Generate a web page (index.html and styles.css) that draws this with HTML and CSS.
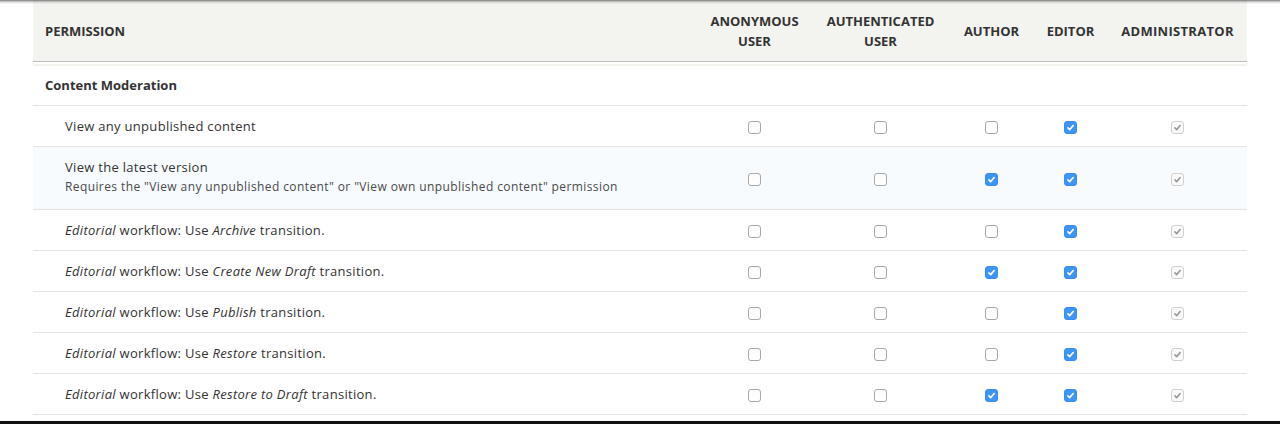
FILE: index.html
```html
<!DOCTYPE html>
<html lang="en">
<head>
<meta charset="utf-8">
<title>Permissions</title>
<link rel="stylesheet" href="styles.css">
</head>
<body>
<div class="top-shade"></div>
<main class="page">
  <table class="perm-table">
    <colgroup>
      <col class="c-perm">
      <col class="c-anon">
      <col class="c-auth">
      <col class="c-author">
      <col class="c-editor">
      <col class="c-admin">
    </colgroup>
    <thead>
      <tr>
        <th class="th-perm">Permission</th>
        <th>Anonymous<br>user</th>
        <th>Authenticated<br>user</th>
        <th>Author</th>
        <th>Editor</th>
        <th class="th-admin">Administrator</th>
      </tr>
    </thead>
    <tbody>
      <tr class="group">
        <td class="module" colspan="6">Content Moderation</td>
      </tr>
      <tr>
        <td class="perm">View any unpublished content</td>
        <td class="cbc"><span class="cb"></span></td>
        <td class="cbc"><span class="cb"></span></td>
        <td class="cbc"><span class="cb"></span></td>
        <td class="cbc"><span class="cb on"><svg viewBox="0 0 12 12"><path d="M3.2 6.4 5.1 8.3 8.9 3.9"/></svg></span></td>
        <td class="cbc"><span class="cb dis"><svg viewBox="0 0 12 12"><path d="M3.2 6.4 5.1 8.3 8.9 3.9"/></svg></span></td>
      </tr>
      <tr class="hl">
        <td class="perm">View the latest version<div class="desc">Requires the "View any unpublished content" or "View own unpublished content" permission</div></td>
        <td class="cbc"><span class="cb"></span></td>
        <td class="cbc"><span class="cb"></span></td>
        <td class="cbc"><span class="cb on"><svg viewBox="0 0 12 12"><path d="M3.2 6.4 5.1 8.3 8.9 3.9"/></svg></span></td>
        <td class="cbc"><span class="cb on"><svg viewBox="0 0 12 12"><path d="M3.2 6.4 5.1 8.3 8.9 3.9"/></svg></span></td>
        <td class="cbc"><span class="cb dis"><svg viewBox="0 0 12 12"><path d="M3.2 6.4 5.1 8.3 8.9 3.9"/></svg></span></td>
      </tr>
      <tr>
        <td class="perm"><em>Editorial</em> workflow: Use <em>Archive</em> transition.</td>
        <td class="cbc"><span class="cb"></span></td>
        <td class="cbc"><span class="cb"></span></td>
        <td class="cbc"><span class="cb"></span></td>
        <td class="cbc"><span class="cb on"><svg viewBox="0 0 12 12"><path d="M3.2 6.4 5.1 8.3 8.9 3.9"/></svg></span></td>
        <td class="cbc"><span class="cb dis"><svg viewBox="0 0 12 12"><path d="M3.2 6.4 5.1 8.3 8.9 3.9"/></svg></span></td>
      </tr>
      <tr>
        <td class="perm"><em>Editorial</em> workflow: Use <em>Create New Draft</em> transition.</td>
        <td class="cbc"><span class="cb"></span></td>
        <td class="cbc"><span class="cb"></span></td>
        <td class="cbc"><span class="cb on"><svg viewBox="0 0 12 12"><path d="M3.2 6.4 5.1 8.3 8.9 3.9"/></svg></span></td>
        <td class="cbc"><span class="cb on"><svg viewBox="0 0 12 12"><path d="M3.2 6.4 5.1 8.3 8.9 3.9"/></svg></span></td>
        <td class="cbc"><span class="cb dis"><svg viewBox="0 0 12 12"><path d="M3.2 6.4 5.1 8.3 8.9 3.9"/></svg></span></td>
      </tr>
      <tr>
        <td class="perm"><em>Editorial</em> workflow: Use <em>Publish</em> transition.</td>
        <td class="cbc"><span class="cb"></span></td>
        <td class="cbc"><span class="cb"></span></td>
        <td class="cbc"><span class="cb"></span></td>
        <td class="cbc"><span class="cb on"><svg viewBox="0 0 12 12"><path d="M3.2 6.4 5.1 8.3 8.9 3.9"/></svg></span></td>
        <td class="cbc"><span class="cb dis"><svg viewBox="0 0 12 12"><path d="M3.2 6.4 5.1 8.3 8.9 3.9"/></svg></span></td>
      </tr>
      <tr>
        <td class="perm"><em>Editorial</em> workflow: Use <em>Restore</em> transition.</td>
        <td class="cbc"><span class="cb"></span></td>
        <td class="cbc"><span class="cb"></span></td>
        <td class="cbc"><span class="cb"></span></td>
        <td class="cbc"><span class="cb on"><svg viewBox="0 0 12 12"><path d="M3.2 6.4 5.1 8.3 8.9 3.9"/></svg></span></td>
        <td class="cbc"><span class="cb dis"><svg viewBox="0 0 12 12"><path d="M3.2 6.4 5.1 8.3 8.9 3.9"/></svg></span></td>
      </tr>
      <tr>
        <td class="perm"><em>Editorial</em> workflow: Use <em>Restore to Draft</em> transition.</td>
        <td class="cbc"><span class="cb"></span></td>
        <td class="cbc"><span class="cb"></span></td>
        <td class="cbc"><span class="cb on"><svg viewBox="0 0 12 12"><path d="M3.2 6.4 5.1 8.3 8.9 3.9"/></svg></span></td>
        <td class="cbc"><span class="cb on"><svg viewBox="0 0 12 12"><path d="M3.2 6.4 5.1 8.3 8.9 3.9"/></svg></span></td>
        <td class="cbc"><span class="cb dis"><svg viewBox="0 0 12 12"><path d="M3.2 6.4 5.1 8.3 8.9 3.9"/></svg></span></td>
      </tr>
    </tbody>
  </table>
</main>
<div class="bottom-edge"></div>
</body>
</html>
```
FILE: styles.css
```css
html, body {
  margin: 0;
  padding: 0;
  background: #fff;
}
body {
  font-family: "Open Sans", "Noto Sans", sans-serif;
  font-size: 13px;
  color: #333;
  width: 1280px;
  height: 424px;
  overflow: hidden;
  position: relative;
}
.page {
  padding: 0 33px;
}
.perm-table {
  width: 1214px;
  border-collapse: collapse;
  table-layout: fixed;
}
.c-perm { width: 665px; }
.c-anon { width: 113px; }
.c-auth { width: 139px; }
.c-author { width: 83px; }
.c-editor { width: 75px; }
.c-admin { width: 139px; }

.perm-table th {
  background: #f3f3ef;
  border-bottom: 1px solid #bfbfba;
  padding: 11px 12px 10px;
  line-height: 20px;
  font-weight: 700;
  font-size: 13px;
  text-transform: uppercase;
  text-align: center;
  vertical-align: middle;
  color: #333;
}
.perm-table th.th-perm {
  text-align: left;
}
.perm-table th.th-admin {
  letter-spacing: 0.3px;
}
.perm-table td {
  border-bottom: 1px solid #e6e4df;
  padding: 10px 12px;
  line-height: 20px;
  vertical-align: middle;
}
.group td {
  padding: 13px 12px 10px;
  background: linear-gradient(to bottom, #fff 0 2px, #e6e4df 2px 3px, #fff 3px);
}
.module {
  font-weight: 700;
}
.perm-table td.perm {
  padding-left: 32px;
  letter-spacing: 0.3px;
}
.hl td {
  background: #f7fbfe;
}
.hl td.perm {
  padding-bottom: 12px;
}
.desc {
  font-size: 12px;
  color: #4a4a4a;
  letter-spacing: 0.4px;
}
.perm em {
  font-style: italic;
  letter-spacing: 0.3px;
}
.cbc {
  text-align: center;
}
.cb {
  display: block;
  box-sizing: border-box;
  width: 13px;
  height: 13px;
  margin: 2px auto 0;
  border: 1px solid #a9a9a9;
  border-radius: 3px;
  background: linear-gradient(#fbfbfb, #ffffff);
}
.cb svg {
  display: block;
  width: 11px;
  height: 11px;
  fill: none;
  stroke-width: 1.8;
  stroke-linecap: round;
  stroke-linejoin: round;
}
.cb.on {
  background: #3d95f6;
  border-color: #3a8cf0;
}
.cb.on svg {
  stroke: #fff;
}
.cb.dis {
  background: #fafafa;
  border-color: #d0d0d0;
}
.cb.dis svg {
  stroke: #9a9a9a;
}
.top-shade {
  position: absolute;
  left: 0;
  top: 0;
  width: 1280px;
  height: 4px;
  background: linear-gradient(to bottom, rgba(80,80,80,0.75), rgba(150,150,150,0.35) 50%, rgba(200,200,200,0));
  z-index: 2;
}
.bottom-edge {
  position: absolute;
  left: 0;
  bottom: 0;
  width: 1280px;
  height: 3px;
  background: #111;
  z-index: 2;
}
```
